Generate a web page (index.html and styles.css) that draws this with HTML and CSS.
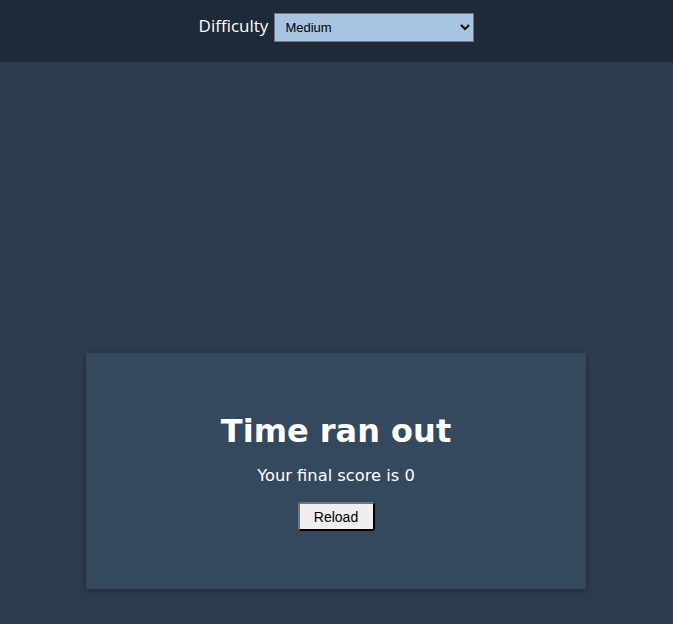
FILE: index.html
```html
<!DOCTYPE html>
<html>
<head>
<meta charset="utf-8">
<link rel="stylesheet" href="styles.css">
</head>
<body>
<header class="topbar">
  <label class="label" for="diff">Difficulty</label>
  <select id="diff" class="select">
    <option>Easy</option>
    <option selected>Medium</option>
    <option>Hard</option>
  </select>
</header>
<main class="main">
  <section class="card">
    <h1 class="title">Time ran out</h1>
    <p class="score">Your final score is 0</p>
    <button class="btn">Reload</button>
  </section>
</main>
</body>
</html>
```
FILE: styles.css
```css
html, body {
  margin: 0;
  padding: 0;
  height: 100%;
}
body {
  background: #2d3c4f;
  font-family: "DejaVu Sans", Verdana, sans-serif;
  color: #fff;
}
.topbar {
  height: 62px;
  background: #1f2a38;
  display: flex;
  align-items: flex-start;
  justify-content: center;
  padding-top: 13px;
  box-sizing: border-box;
  gap: 6px;
}
.label {
  font-family: "Open Sans", sans-serif;
  font-size: 17px;
  line-height: 26px;
  color: #fff;
}
.select {
  width: 200px;
  height: 29px;
  background: #a7c5e3;
  border: 1px solid #707a86;
  border-radius: 0;
  font-family: "Liberation Sans", Arial, sans-serif;
  font-size: 13px;
  padding: 0 6px;
  color: #000;
}
.main {
  display: flex;
  justify-content: center;
  padding-top: 291px;
  padding-right: 1px;
}
.card {
  width: 500px;
  height: 236px;
  background: #34495e;
  box-shadow: 0 2px 6px rgba(0,0,0,0.35);
  display: flex;
  flex-direction: column;
  align-items: center;
  box-sizing: border-box;
  padding-top: 58px;
}
.title {
  margin: 0;
  font-size: 32px;
  font-weight: bold;
  line-height: 40px;
}
.score {
  margin: 14px 0 0;
  font-size: 16.3px;
  line-height: 22px;
}
.btn {
  margin-top: 15px;
  width: 77px;
  height: 29px;
  background: #efefef;
  border: 2px solid #000;
  border-color: #767676 #000 #000 #767676;
  border-radius: 3px;
  font-family: "Liberation Sans", Arial, sans-serif;
  font-size: 14px;
  color: #000;
}
```
